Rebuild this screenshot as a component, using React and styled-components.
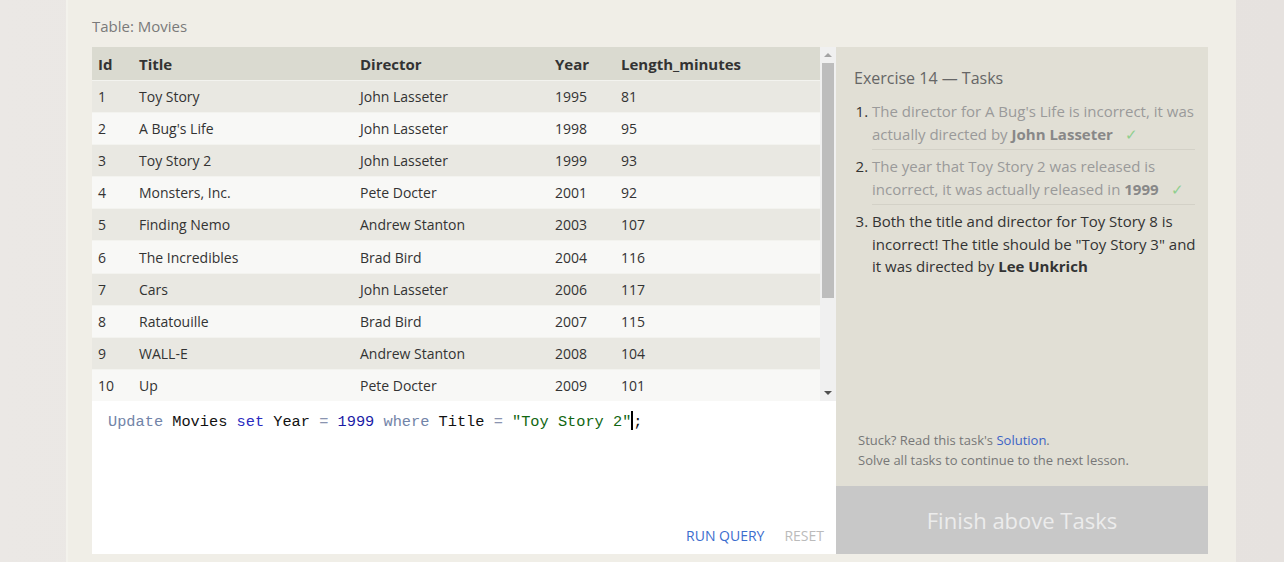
import React from "react";
import styled, { createGlobalStyle } from "styled-components";

const GlobalStyle = createGlobalStyle`
  body {
    margin: 0;
    background: linear-gradient(to right, #ebe8e5 0%, #e6e2df 100%);
    font-family: "Open Sans", "Liberation Sans", sans-serif;
  }
`;

const Page = styled.div`
  width: 1170px;
  height: 562px;
  margin-left: 66px;
  background: #f0eee7;
  border-left: 2px solid #f3f2ec;
  box-sizing: border-box;
  padding: 16px 28px 0 24px;
  overflow: hidden;
`;

const Caption = styled.div`
  font-size: 15px;
  color: #7a7a7a;
  height: 31px;
  line-height: 20px;
`;

const Workspace = styled.div`
  display: flex;
`;

const LeftCol = styled.div`
  width: 744px;
  display: flex;
  flex-direction: column;
`;

const TableWrap = styled.div`
  display: flex;
  height: 354px;
`;

const Table = styled.table`
  flex: 1;
  border-collapse: collapse;
  font-size: 14px;
  color: #333;
`;

const HeadCell = styled.th`
  background: #dadad0;
  height: 33px;
  text-align: left;
  font-weight: 700;
  font-size: 15px;
  color: #333;
  padding: 0 6px;
  width: ${(p) => p.$w || "auto"};
`;

const Row = styled.tr`
  background: ${(p) => (p.$odd ? "#e9e8e2" : "#f8f8f6")};
  border-top: 1px solid #f3f3ef;
`;

const Cell = styled.td`
  height: 31px;
  padding: 0 6px;
`;

const Scrollbar = styled.div`
  width: 16px;
  background: #f0f0f0;
  display: flex;
  flex-direction: column;
  align-items: center;
`;

const Arrow = styled.div`
  width: 0;
  height: 0;
  border-left: 4px solid transparent;
  border-right: 4px solid transparent;
  ${(p) =>
    p.$up
      ? "border-bottom: 4px solid #a3a3a3; margin: 6px 0 6px;"
      : "border-top: 4px solid #505050; margin-top: auto; margin-bottom: 6px;"}
`;

const Thumb = styled.div`
  width: 12px;
  height: 235px;
  background: #bdbdbd;
`;

const Editor = styled.div`
  height: 153px;
  background: #fff;
  display: flex;
  flex-direction: column;
  padding: 10px 12px 9px 16px;
  box-sizing: border-box;
`;

const Code = styled.div`
  font-family: "Liberation Mono", "DejaVu Sans Mono", monospace;
  font-size: 15.3px;
  line-height: 23px;
  color: #111;
`;

const Tok = styled.span`
  color: ${(p) => p.$c};
`;

const Caret = styled.span`
  display: inline-block;
  width: 2px;
  height: 19px;
  background: #000;
  vertical-align: -4px;
`;

const Actions = styled.div`
  margin-top: auto;
  display: flex;
  justify-content: flex-end;
  gap: 20px;
  font-size: 14px;
`;

const Action = styled.span`
  color: ${(p) => (p.$muted ? "#bbbbbb" : "#3c6dce")};
`;

const Side = styled.div`
  width: 372px;
  height: 507px;
  background: #e1dfd5;
  display: flex;
  flex-direction: column;
`;

const SideBody = styled.div`
  padding: 20px 3px 0 18px;
  flex: 1;
  display: flex;
  flex-direction: column;
`;

const SideTitle = styled.div`
  font-size: 16px;
  color: #666;
  margin-bottom: 11px;
`;

const Tasks = styled.ol`
  margin: 0;
  padding: 0 0 0 18px;
  font-size: 15px;
  line-height: 22.5px;
`;

const Task = styled.li`
  color: ${(p) => (p.$done ? "#9a9a9a" : "#333")};
  padding: 0 0 4px;
  margin: 0 10px 5px 0;
  border-bottom: ${(p) => (p.$done ? "1px solid #d3d1c7" : "none")};
  &:last-child {
    margin-right: 0;
  }
  &::marker {
    color: #333;
  }
  b {
    color: ${(p) => (p.$done ? "#888" : "#333")};
  }
`;

const Check = styled.span`
  color: #8fcf8f;
  margin-left: 12px;
`;

const Help = styled.div`
  margin-top: auto;
  padding: 0 0 16px 4px;
  font-size: 13px;
  line-height: 20px;
  color: #777;
`;

const Link = styled.span`
  color: #3c63c5;
`;

const Finish = styled.div`
  height: 68px;
  background: #c8c8c8;
  color: #ececec;
  font-size: 22px;
  display: flex;
  align-items: center;
  justify-content: center;
`;

const movies = [
  [1, "Toy Story", "John Lasseter", 1995, 81],
  [2, "A Bug's Life", "John Lasseter", 1998, 95],
  [3, "Toy Story 2", "John Lasseter", 1999, 93],
  [4, "Monsters, Inc.", "Pete Docter", 2001, 92],
  [5, "Finding Nemo", "Andrew Stanton", 2003, 107],
  [6, "The Incredibles", "Brad Bird", 2004, 116],
  [7, "Cars", "John Lasseter", 2006, 117],
  [8, "Ratatouille", "Brad Bird", 2007, 115],
  [9, "WALL-E", "Andrew Stanton", 2008, 104],
  [10, "Up", "Pete Docter", 2009, 101],
];

const App = () => {
  return (
    <>
      <GlobalStyle />
      <Page>
        <Caption>Table: Movies</Caption>
        <Workspace>
          <LeftCol>
            <TableWrap>
              <Table>
                <thead>
                  <tr>
                    <HeadCell $w="29px">Id</HeadCell>
                    <HeadCell $w="209px">Title</HeadCell>
                    <HeadCell $w="183px">Director</HeadCell>
                    <HeadCell $w="54px">Year</HeadCell>
                    <HeadCell>Length_minutes</HeadCell>
                  </tr>
                </thead>
                <tbody>
                  {movies.map((m, i) => (
                    <Row key={m[0]} $odd={i % 2 === 0}>
                      {m.map((v, j) => (
                        <Cell key={j}>{v}</Cell>
                      ))}
                    </Row>
                  ))}
                </tbody>
              </Table>
              <Scrollbar>
                <Arrow $up />
                <Thumb />
                <Arrow />
              </Scrollbar>
            </TableWrap>
            <Editor>
              <Code>
                <Tok $c="#7284a8">Update</Tok> Movies{" "}
                <Tok $c="#2a2ac0">set</Tok> Year{" "}
                <Tok $c="#8a94b0">=</Tok> <Tok $c="#1a1aa6">1999</Tok>{" "}
                <Tok $c="#7284a8">where</Tok> Title{" "}
                <Tok $c="#8a94b0">=</Tok>{" "}
                <Tok $c="#116611">"Toy Story 2"</Tok>
                <Caret />;
              </Code>
              <Actions>
                <Action>RUN QUERY</Action>
                <Action $muted>RESET</Action>
              </Actions>
            </Editor>
          </LeftCol>
          <Side>
            <SideBody>
              <SideTitle>Exercise 14 — Tasks</SideTitle>
              <Tasks>
                <Task $done>
                  The director for A Bug's Life is incorrect, it was actually
                  directed by <b>John Lasseter</b>
                  <Check>✓</Check>
                </Task>
                <Task $done>
                  The year that Toy Story 2 was released is incorrect, it was
                  actually released in <b>1999</b>
                  <Check>✓</Check>
                </Task>
                <Task>
                  Both the title and director for Toy Story 8 is incorrect! The
                  title should be "Toy Story 3" and it was directed by{" "}
                  <b>Lee Unkrich</b>
                </Task>
              </Tasks>
              <Help>
                Stuck? Read this task's <Link>Solution</Link>.
                <br />
                Solve all tasks to continue to the next lesson.
              </Help>
            </SideBody>
            <Finish>Finish above Tasks</Finish>
          </Side>
        </Workspace>
      </Page>
    </>
  );
};

export default App;
